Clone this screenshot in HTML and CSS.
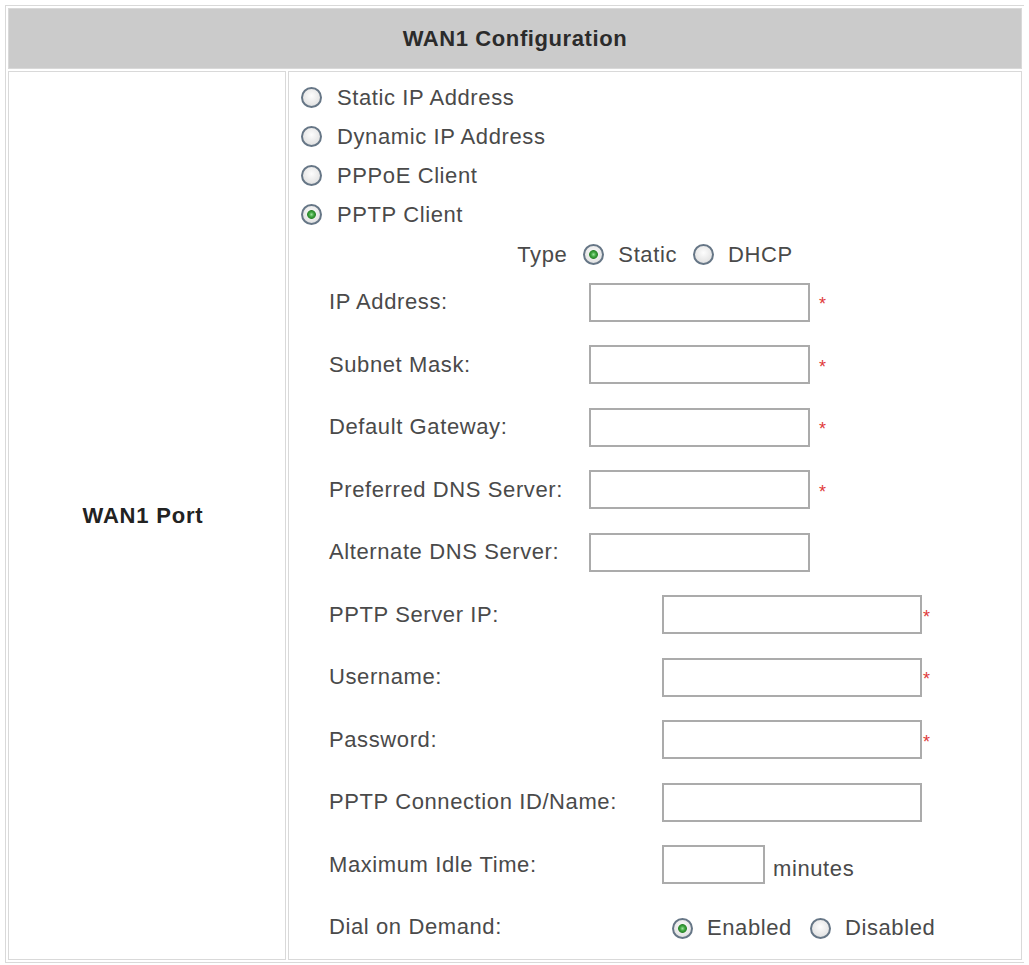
FILE: index.html
```html
<html>
  <head>
    <link rel="stylesheet" href="styles.css">
  </head>
  <body>
    <div class="config">
      <div class="title">WAN1 Configuration</div>
      <div class="port">WAN1 Port</div>
      <div class="setup">
        <div class="modes">
          <label class="opt"><input type="radio" name="mode">Static IP Address</label>
          <label class="opt"><input type="radio" name="mode">Dynamic IP Address</label>
          <label class="opt"><input type="radio" name="mode">PPPoE Client</label>
          <label class="opt"><input type="radio" name="mode" checked>PPTP Client</label>
        </div>
        <div class="type-row">
          <span>Type</span>
          <label class="opt"><input type="radio" name="ptype" checked>Static</label>
          <label class="opt"><input type="radio" name="ptype">DHCP</label>
        </div>

        <!-- static addressing -->
        <div class="fields">
          <span class="name">IP Address:</span>
          <input class="box" type="text">
          <span class="req">*</span>

          <span class="name">Subnet Mask:</span>
          <input class="box" type="text">
          <span class="req">*</span>

          <span class="name">Default Gateway:</span>
          <input class="box" type="text">
          <span class="req">*</span>

          <span class="name">Preferred DNS Server:</span>
          <input class="box" type="text">
          <span class="req">*</span>

          <span class="name">Alternate DNS Server:</span>
          <input class="box" type="text">
          <span></span>
        </div>

        <!-- pptp account -->
        <div class="fields wide">
          <span class="name">PPTP Server IP:</span>
          <input class="box" type="text">
          <span class="req">*</span>

          <span class="name">Username:</span>
          <input class="box" type="text">
          <span class="req">*</span>

          <span class="name">Password:</span>
          <input class="box" type="password">
          <span class="req">*</span>

          <span class="name">PPTP Connection ID/Name:</span>
          <input class="box" type="text">
          <span></span>

          <span class="name">Maximum Idle Time:</span>
          <div class="idle">
            <input class="box short" type="text">
            <span class="unit">minutes</span>
          </div>
          <span></span>

          <span class="name">Dial on Demand:</span>
          <div class="dial">
            <label class="opt"><input type="radio" name="dial" checked>Enabled</label>
            <label class="opt"><input type="radio" name="dial">Disabled</label>
          </div>
          <span></span>
        </div>
      </div>
    </div>
  </body>
</html>
```

FILE: styles.css
```css
body {
  margin: 5px;
  font-family: "Liberation Sans", Arial, sans-serif;
  color: #4a4a4a;
  background: #fff;
}

/* outer table ================================= */
.config {
  display: grid;
  grid-template-columns: 278px 734px;
  grid-template-rows: 61px 889px;
  gap: 2px;
  padding: 2px;
  width: 1020px;
  box-sizing: border-box;
  border: 1px solid #d9d9d9;
}
.title, .port, .setup {
  border: 1px solid #d9d9d9;
}
.title {
  grid-column: 1 / -1;
  display: flex;
  align-items: center;
  justify-content: center;
  background: #cbcbcb;
  color: #2b2b2b;
  font-size: 22px;
  font-weight: bold;
  letter-spacing: 0.6px;
}
.port {
  display: flex;
  align-items: center;
  justify-content: center;
  color: #222;
  font-size: 22px;
  font-weight: bold;
  letter-spacing: 0.8px;
  padding-right: 8px;
}
.setup {
  font-size: 22px;
  letter-spacing: 0.6px;
}

/* radios ====================================== */
input[type=radio] {
  -webkit-appearance: none;
  appearance: none;
  flex: none;
  width: 21px;
  height: 21px;
  margin: 0;
  border-radius: 50%;
  border: 2px solid #667686;
  box-sizing: border-box;
  background: radial-gradient(circle at 50% 40%, #fdfdfd 0, #e6e6e6 65%, #c9ced3 100%);
}
input[type=radio]:checked {
  background:
    radial-gradient(circle, #9be29b 0, #3aa23a 2.5px, #2e872e 4px, transparent 4.8px),
    radial-gradient(circle at 50% 40%, #fdfdfd 0, #e6e6e6 65%, #c9ced3 100%);
}
.opt {
  display: flex;
  align-items: center;
  gap: 15px;
  white-space: nowrap;
}

.modes {
  padding: 6px 0 0 12px;
}
.modes .opt {
  height: 39px;
}

.type-row {
  display: flex;
  align-items: center;
  justify-content: center;
  gap: 16px;
  height: 37px;
  padding-top: 4px;
  box-sizing: border-box;
}
.type-row .opt {
  gap: 14px;
}

/* text fields ================================= */
.fields {
  display: grid;
  grid-template-columns: 260px 221px auto;
  grid-auto-rows: 62.5px;
  align-items: center;
  padding-left: 40px;
}
.fields.wide {
  grid-template-columns: 333px 260px auto;
}
.name {
  white-space: nowrap;
}
.box {
  width: 221px;
  height: 39px;
  margin: 0;
  padding: 0 4px;
  box-sizing: border-box;
  border: 2px solid #ababab;
  background: #fff;
}
.wide .box {
  width: 260px;
}
.wide .box.short {
  width: 103px;
}
.req {
  color: #e03a3a;
  font-size: 18px;
  line-height: 1;
  padding: 4px 0 0 9px;
}
.wide .req {
  padding-left: 1px;
}

.idle {
  display: flex;
  align-items: center;
}
.unit {
  padding: 8px 0 0 8px;
}

.dial {
  display: flex;
  align-items: center;
  gap: 18px;
  padding: 2px 0 0 10px;
}
.dial .opt {
  gap: 14px;
}
```
